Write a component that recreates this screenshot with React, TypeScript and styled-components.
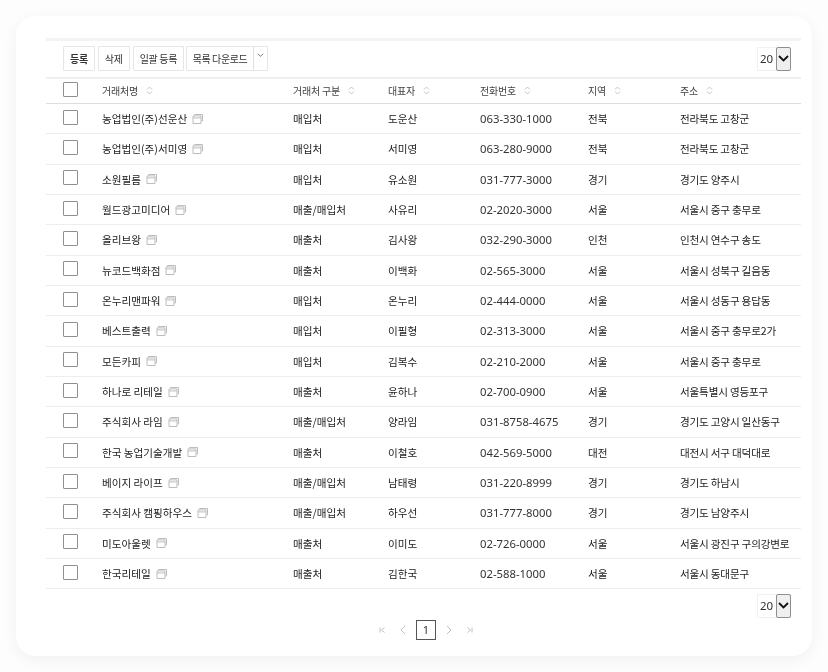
import { createGlobalStyle, styled } from 'styled-components';

const GlobalStyle = createGlobalStyle`
  html, body {
    margin: 0;
    height: 100%;
    background: #fdfdfd;
  }
  body {
    font-family: "Noto Sans CJK KR", "Noto Sans", sans-serif;
    color: #333;
  }
`;

const COLUMNS = '56px 191px 95px 92px 108px 92px 121px';

const Page = styled.div`
  width: 828px;
  height: 672px;
  padding: 16px;
  box-sizing: border-box;
  overflow: hidden;
`;

const Card = styled.main`
  width: 796px;
  height: 640px;
  box-sizing: border-box;
  padding: 22px 11px 0 30px;
  background: #fff;
  border-radius: 20px;
  box-shadow: 0 4px 16px rgba(0, 0, 0, 0.05);
  filter: blur(0.4px);
`;

const Toolbar = styled.div`
  display: flex;
  align-items: center;
  justify-content: space-between;
  height: 40.5px;
  box-sizing: border-box;
  padding: 0 10px 0 17px;
  border-top: 3px solid #f3f3f3;
  border-bottom: 2px solid #efefef;
`;

const ButtonGroup = styled.div`
  display: flex;
  gap: 3px;
`;

const ToolButton = styled.button<{ $strong?: boolean }>`
  height: 25px;
  padding: 0 6px;
  background: #fff;
  border: 1px solid #e6e6e6;
  border-radius: 1px;
  font-family: inherit;
  font-size: 10px;
  letter-spacing: -0.3px;
  font-weight: ${({ $strong }) => ($strong ? 700 : 400)};
  color: #333;
  white-space: nowrap;
`;

const SplitButton = styled.div`
  display: flex;
  height: 25px;
  margin-left: -1px;
  border: 1px solid #e6e6e6;
  border-radius: 1px;
  box-sizing: border-box;
`;

const SplitLabel = styled.span`
  display: flex;
  align-items: center;
  padding: 0 5.5px;
  font-size: 10px;
  letter-spacing: -0.4px;
  color: #333;
  white-space: nowrap;
`;

const SplitArrow = styled.span`
  display: flex;
  justify-content: center;
  width: 14px;
  padding-top: 6px;
  box-sizing: border-box;
  border-left: 1px solid #e0e0e0;
  color: #666;
`;

const PageSize = styled.div`
  display: flex;
  width: 34px;
  height: 24px;
  box-sizing: border-box;
  border: 1px solid #f1f1f1;
  font-family: "Noto Sans", sans-serif;
  font-size: 11.5px;
  color: #333;
`;

const PageSizeValue = styled.span`
  flex: 1;
  padding-left: 2px;
  line-height: 21px;
`;

const PageSizeButton = styled.span`
  display: flex;
  align-items: center;
  justify-content: center;
  width: 15px;
  margin: -1px -1px -1px 0;
  box-sizing: border-box;
  background: #efefef;
  border: 1px solid #8e8e8e;
  border-radius: 2px;
  color: #111;
`;

const Row = styled.div<{ $head?: boolean }>`
  display: grid;
  grid-template-columns: ${COLUMNS};
  align-items: center;
  height: ${({ $head }) => ($head ? '25.5px' : '30.33px')};
  box-sizing: border-box;
  border-bottom: 1px solid ${({ $head }) => ($head ? '#dedede' : '#ededed')};
  font-size: ${({ $head }) => ($head ? '10px' : '10.6px')};
  letter-spacing: ${({ $head }) => ($head ? '-0.2px' : '0')};
  color: ${({ $head }) => ($head ? '#444' : '#222')};
`;

const Cell = styled.div`
  display: flex;
  align-items: center;
  white-space: nowrap;
`;

const Phone = styled(Cell)`
  font-family: "Noto Sans", sans-serif;
  font-size: 11.3px;
  color: #333;
`;

const Address = styled(Cell)`
  letter-spacing: -0.2px;
`;

const Check = styled.span`
  display: block;
  width: 13px;
  height: 13px;
  margin: -3px 0 0 17px;
  background: #fff;
  border: 1px solid #8f8f8f;
  border-radius: 1px;
`;

const SortIcon = styled.svg`
  margin-left: 8px;
  color: #c4c4c4;
`;

const WindowIcon = styled.svg`
  margin-left: 5px;
  color: #bdbdbd;
`;

const Footer = styled.div`
  display: flex;
  justify-content: flex-end;
  padding: 4.7px 10px 0 0;
`;

const Pager = styled.nav`
  display: flex;
  align-items: center;
  justify-content: center;
  gap: 13px;
  width: 755px;
  margin-top: 2px;
  padding-left: 5px;
  box-sizing: border-box;
  color: #c0c0c0;
`;

const CurrentPage = styled.span`
  display: flex;
  align-items: center;
  justify-content: center;
  width: 20px;
  height: 20px;
  margin: 0 -4px;
  box-sizing: border-box;
  border: 1px solid #555;
  font-family: "Noto Sans", sans-serif;
  font-size: 11px;
  color: #333;
`;

type Partner = {
  name: string;
  kind: string;
  owner: string;
  phone: string;
  region: string;
  address: string;
};

const partners: Partner[] = [
  { name: '농업법인(주)선운산', kind: '매입처', owner: '도운산', phone: '063-330-1000', region: '전북', address: '전라북도 고창군' },
  { name: '농업법인(주)서미영', kind: '매입처', owner: '서미영', phone: '063-280-9000', region: '전북', address: '전라북도 고창군' },
  { name: '소원필름', kind: '매입처', owner: '유소원', phone: '031-777-3000', region: '경기', address: '경기도 양주시' },
  { name: '월드광고미디어', kind: '매출/매입처', owner: '사유리', phone: '02-2020-3000', region: '서울', address: '서울시 중구 충무로' },
  { name: '올리브왕', kind: '매출처', owner: '김사왕', phone: '032-290-3000', region: '인천', address: '인천시 연수구 송도' },
  { name: '뉴코드백화점', kind: '매출처', owner: '이백화', phone: '02-565-3000', region: '서울', address: '서울시 성북구 길음동' },
  { name: '온누리맨파워', kind: '매입처', owner: '온누리', phone: '02-444-0000', region: '서울', address: '서울시 성동구 용답동' },
  { name: '베스트출력', kind: '매입처', owner: '이필형', phone: '02-313-3000', region: '서울', address: '서울시 중구 충무로2가' },
  { name: '모든카피', kind: '매입처', owner: '김복수', phone: '02-210-2000', region: '서울', address: '서울시 중구 충무로' },
  { name: '하나로 리테일', kind: '매출처', owner: '윤하나', phone: '02-700-0900', region: '서울', address: '서울특별시 영등포구' },
  { name: '주식회사 라임', kind: '매출/매입처', owner: '양라임', phone: '031-8758-4675', region: '경기', address: '경기도 고양시 일산동구' },
  { name: '한국 농업기술개발', kind: '매출처', owner: '이철호', phone: '042-569-5000', region: '대전', address: '대전시 서구 대덕대로' },
  { name: '베이지 라이프', kind: '매출/매입처', owner: '남태령', phone: '031-220-8999', region: '경기', address: '경기도 하남시' },
  { name: '주식회사 캠핑하우스', kind: '매출/매입처', owner: '하우선', phone: '031-777-8000', region: '경기', address: '경기도 남양주시' },
  { name: '미도아울렛', kind: '매출처', owner: '이미도', phone: '02-726-0000', region: '서울', address: '서울시 광진구 구의강변로' },
  { name: '한국리테일', kind: '매출처', owner: '김한국', phone: '02-588-1000', region: '서울', address: '서울시 동대문구' },
];

const Sort = () => (
  <SortIcon width="7" height="9" viewBox="0 0 7 9" fill="none" stroke="currentColor" strokeWidth="1">
    <path d="M1 3.5 3.5 1 6 3.5M1 5.5 3.5 8 6 5.5" />
  </SortIcon>
);

const OpenWindow = () => (
  <WindowIcon width="11" height="10" viewBox="0 0 11 10" fill="none" stroke="currentColor" strokeWidth="1">
    <path d="M2.5 1.5v-1h8v6.5H9.5" />
    <path d="M1 1.9h8v7.6H1zM1 3.9h8" />
  </WindowIcon>
);

const Chevron = ({ size = 8 }: { size?: number }) => (
  <svg width={size} height={size * 0.65} viewBox="0 0 8 5" fill="none" stroke="currentColor" strokeWidth="1">
    <path d="M1 .8 4 3.8 7 .8" />
  </svg>
);

const SizeSelect = () => (
  <PageSize>
    <PageSizeValue>20</PageSizeValue>
    <PageSizeButton>
      <svg width="11" height="7" viewBox="0 0 11 7" fill="none" stroke="currentColor" strokeWidth="1.8">
        <path d="M1 1l4.5 4.5L10 1" />
      </svg>
    </PageSizeButton>
  </PageSize>
);

const PagerIcon = ({ d }: { d: string }) => (
  <svg width="8" height="10" viewBox="0 0 8 10" fill="none" stroke="currentColor" strokeWidth="1">
    <path d={d} />
  </svg>
);

export default function App() {
  return (
    <Page>
      <GlobalStyle />
      <Card>
        <Toolbar>
          <ButtonGroup>
            <ToolButton $strong>등록</ToolButton>
            <ToolButton>삭제</ToolButton>
            <ToolButton>일괄 등록</ToolButton>
            <SplitButton>
              <SplitLabel>목록 다운로드</SplitLabel>
              <SplitArrow>
                <Chevron size={7} />
              </SplitArrow>
            </SplitButton>
          </ButtonGroup>
          <SizeSelect />
        </Toolbar>

        <Row $head>
          <Cell>
            <Check />
          </Cell>
          <Cell>거래처명<Sort /></Cell>
          <Cell>거래처 구분<Sort /></Cell>
          <Cell>대표자<Sort /></Cell>
          <Cell>전화번호<Sort /></Cell>
          <Cell>지역<Sort /></Cell>
          <Cell>주소<Sort /></Cell>
        </Row>

        {partners.map((p) => (
          <Row key={p.name}>
            <Cell>
              <Check />
            </Cell>
            <Cell>
              {p.name}
              <OpenWindow />
            </Cell>
            <Cell>{p.kind}</Cell>
            <Cell>{p.owner}</Cell>
            <Phone>{p.phone}</Phone>
            <Cell>{p.region}</Cell>
            <Address>{p.address}</Address>
          </Row>
        ))}

        <Footer>
          <SizeSelect />
        </Footer>

        <Pager>
          <PagerIcon d="M2 2.5v5M6.5 2.5 3.5 5l3 2.5" />
          <PagerIcon d="M6 1 2 5l4 4" />
          <CurrentPage>1</CurrentPage>
          <PagerIcon d="M2 1l4 4-4 4" />
          <PagerIcon d="M6 2.5v5M1.5 2.5 4.5 5l-3 2.5" />
        </Pager>
      </Card>
    </Page>
  );
}
